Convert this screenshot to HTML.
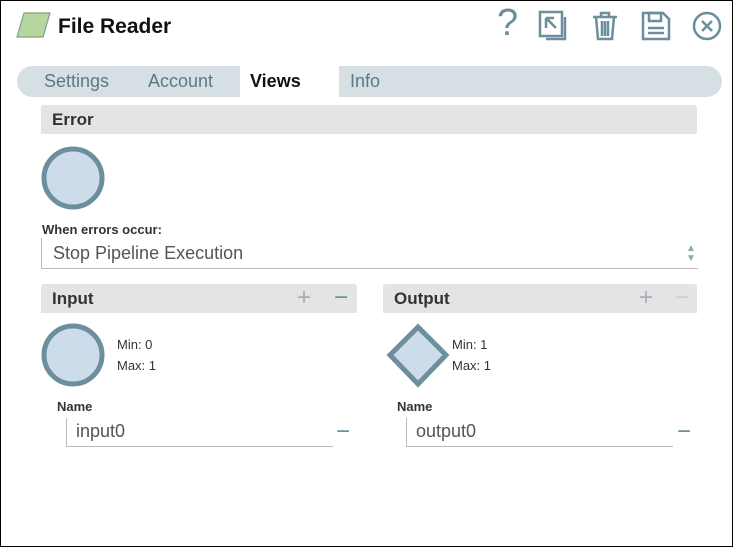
<!DOCTYPE html>
<html><head><style>
body{margin:0;width:733px;height:547px;overflow:hidden;font-family:"Liberation Sans",sans-serif;background:#fff}
.frame{position:absolute;left:0;top:0;width:731px;height:545px;border:1px solid #000;}
.abs{position:absolute}
.hdr{position:absolute;background:#e4e4e4;border-radius:3px 3px 0 0;font-weight:bold;font-size:17px;color:#333;}
.hdr span{position:absolute;left:11px;top:5px}
.small{font-size:13px;color:#333}
</style></head><body>
<div class="frame"></div>
<svg class="abs" style="left:16px;top:12px" width="36" height="26"><polygon points="8,1 34,1 27,25 1,25" fill="#b6d7a0" stroke="#8a9a80" stroke-width="1.2"/></svg>
<div class="abs" style="left:58px;top:15px;font-size:21px;font-weight:bold;color:#111">File Reader</div>
<div class="abs" style="left:497px;top:2px;font-size:38px;color:#6d8e9c">?</div>
<svg class="abs" style="left:538px;top:10px" width="32" height="32" fill="none" stroke="#6d8e9c" stroke-width="2.5"><rect x="2" y="2" width="22" height="24"/><path d="M27 7v22H8"/><path d="M8 8l0 10M8 8h8M8 8l10 10" /></svg>
<svg class="abs" style="left:590px;top:10px" width="30" height="32" fill="none" stroke="#6d8e9c" stroke-width="2.5"><path d="M3 7h24M11 7V3h8v4M6 7l2 22h14l2-22M12 11v15M15 11v15M18 11v15"/></svg>
<svg class="abs" style="left:640px;top:10px" width="32" height="32" fill="none" stroke="#6d8e9c" stroke-width="2.5"><path d="M3 3h20l6 6v20H3z"/><rect x="9" y="3" width="12" height="8"/><path d="M8 18h16M8 23h16"/></svg>
<svg class="abs" style="left:692px;top:11px" width="32" height="32" fill="none" stroke="#6d8e9c" stroke-width="2.5"><circle cx="15" cy="15" r="13"/><path d="M10 10l10 10M20 10l-10 10"/></svg>
<div class="abs" style="left:17px;top:66px;width:705px;height:31px;background:#d6dfe3;border-radius:16px"></div>
<div class="abs" style="left:240px;top:66px;width:99px;height:31px;background:#fff"></div>
<div class="abs" style="left:44px;top:71px;font-size:18px;color:#5a7a88">Settings</div>
<div class="abs" style="left:148px;top:71px;font-size:18px;color:#5a7a88">Account</div>
<div class="abs" style="left:250px;top:71px;font-size:18px;color:#111;font-weight:bold">Views</div>
<div class="abs" style="left:350px;top:71px;font-size:18px;color:#5a7a88">Info</div>
<div class="hdr" style="left:41px;top:105px;width:656px;height:29px"><span>Error</span></div>
<svg class="abs" style="left:40px;top:145px" width="68" height="68"><ellipse cx="33" cy="33" rx="29" ry="29" fill="#cddceb" stroke="#6d8e9c" stroke-width="5"/></svg>
<div class="abs small" style="left:42px;top:222px;font-weight:bold">When errors occur:</div>
<div class="abs" style="left:41px;top:238px;width:656px;height:30px;border-left:1px solid #bbb;border-bottom:1px solid #bbb"></div>
<div class="abs" style="left:53px;top:243px;font-size:18px;color:#555">Stop Pipeline Execution</div>
<div class="abs" style="left:686px;top:244px;font-size:10px;color:#8aa;line-height:10px">▲<br>▼</div>
<div class="hdr" style="left:41px;top:284px;width:316px;height:29px"><span>Input</span><span style="left:256px;top:0;font-weight:normal;font-size:24px;color:#aab">+</span><span style="left:293px;top:0;font-weight:normal;font-size:24px;color:#6d8e9c">−</span></div>
<div class="hdr" style="left:383px;top:284px;width:314px;height:29px"><span>Output</span><span style="left:256px;top:0;font-weight:normal;font-size:24px;color:#aab">+</span><span style="left:292px;top:0;font-weight:normal;font-size:24px;color:#ccd">−</span></div>
<svg class="abs" style="left:40px;top:322px" width="68" height="68"><ellipse cx="33" cy="33" rx="29" ry="29" fill="#cddceb" stroke="#6d8e9c" stroke-width="5"/></svg>
<svg class="abs" style="left:384px;top:322px" width="70" height="68"><polygon points="34,5 62,33 34,62 6,33" fill="#cddceb" stroke="#6d8e9c" stroke-width="5"/></svg>
<div class="abs small" style="left:117px;top:334px;line-height:21px">Min: 0<br>Max: 1</div>
<div class="abs small" style="left:452px;top:334px;line-height:21px">Min: 1<br>Max: 1</div>
<div class="abs small" style="left:57px;top:399px;font-weight:bold">Name</div>
<div class="abs small" style="left:397px;top:399px;font-weight:bold">Name</div>
<div class="abs" style="left:66px;top:418px;width:266px;height:28px;border-left:1px solid #bbb;border-bottom:1px solid #bbb"></div>
<div class="abs" style="left:406px;top:418px;width:266px;height:28px;border-left:1px solid #bbb;border-bottom:1px solid #bbb"></div>
<div class="abs" style="left:76px;top:421px;font-size:18px;color:#555">input0</div>
<div class="abs" style="left:416px;top:421px;font-size:18px;color:#555">output0</div>
<div class="abs" style="left:336px;top:418px;font-size:24px;color:#6d8e9c">−</div>
<div class="abs" style="left:677px;top:418px;font-size:24px;color:#6d8e9c">−</div>
</body></html>
